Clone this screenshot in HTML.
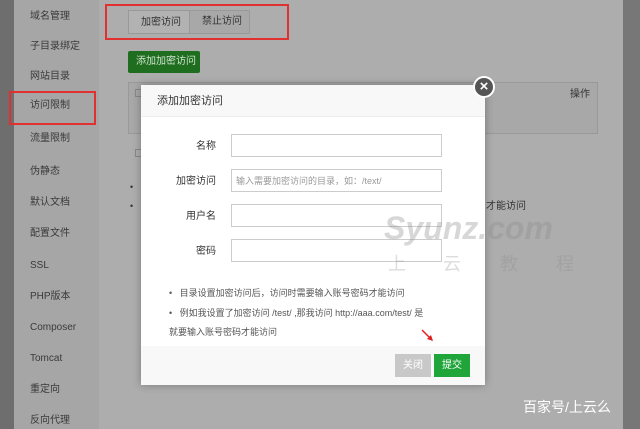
<!DOCTYPE html><html><head><meta charset="utf-8"><style>
*{margin:0;padding:0;box-sizing:border-box}
body{width:640px;height:429px;overflow:hidden;position:relative;background:#adadad;font-family:"Liberation Sans","Noto Sans CJK SC",sans-serif;font-size:10px;color:#333}
.abs{position:absolute}
.side div{position:absolute;left:30px;color:#3a3a3a;font-size:10px;line-height:12px}
.lbl{position:absolute;right:0;width:80px;text-align:right;color:#333;font-size:10px;line-height:12px}
.inp{position:absolute;left:231px;width:211px;height:23px;border:1px solid #ccc;background:#fff;font-size:9px;color:#999;padding:5px 0 0 4px;line-height:12px}
</style></head><body>
<div class="abs" style="left:0;top:0;width:14px;height:429px;background:#6e6e6e"></div>
<div class="abs" style="left:14px;top:0;width:85px;height:429px;background:#a6a6a6"></div>
<div class="abs" style="left:623px;top:0;width:17px;height:429px;background:#777"></div>
<div class="side">
<div style="top:11px">域名管理</div><div style="top:41px">子目录绑定</div><div style="top:71px">网站目录</div><div style="top:100px">访问限制</div><div style="top:133px">流量限制</div><div style="top:166px">伪静态</div><div style="top:197px">默认文档</div><div style="top:228px">配置文件</div><div style="top:260px">SSL</div><div style="top:291px">PHP版本</div><div style="top:322px">Composer</div><div style="top:353px">Tomcat</div><div style="top:384px">重定向</div><div style="top:415px">反向代理</div>
</div>
<div class="abs" style="left:9px;top:91px;width:87px;height:34px;border:2px solid #e03030"></div>
<div class="abs" style="left:128px;top:10px;width:122px;height:24px;border:1px solid #999;background:#a8a8a8"></div>
<div class="abs" style="left:128px;top:10px;width:62px;height:24px;background:#b2b2b2;border:1px solid #999;font-size:10px;line-height:12px;padding:6px 0 0 12px">加密访问</div>
<div class="abs" style="left:202px;top:16px;font-size:10px;line-height:12px">禁止访问</div>
<div class="abs" style="left:105px;top:4px;width:184px;height:36px;border:2px solid #e03030"></div>
<div class="abs" style="left:128px;top:51px;width:72px;height:22px;background:#1f6e1f;color:#cfe3cf;font-size:10px;line-height:12px;padding:5px 0 0 8px;border-radius:2px">添加加密访问</div>
<div class="abs" style="left:128px;top:82px;width:470px;height:52px;border:1px solid #999;background:#a8a8a8"></div>
<div class="abs" style="left:135px;top:89px;width:8px;height:8px;border:1px solid #888"></div>
<div class="abs" style="left:135px;top:149px;width:8px;height:8px;border:1px solid #888"></div>
<div class="abs" style="left:130px;top:182px;font-size:9px;line-height:10px">•</div>
<div class="abs" style="left:130px;top:201px;font-size:9px;line-height:10px">•</div>
<div class="abs" style="left:570px;top:89px;font-size:10px;line-height:12px">操作</div>
<div class="abs" style="left:486px;top:201px;font-size:10px;line-height:12px">才能访问</div>
<div class="abs" style="left:141px;top:85px;width:344px;height:300px;background:#fff;box-shadow:0 0 8px rgba(0,0,0,.3)"></div>
<div class="abs" style="left:141px;top:85px;width:344px;height:32px;background:#f8f8f8;border-bottom:1px solid #eee;font-size:11px;line-height:13px;padding:10px 0 0 16px">添加加密访问</div>
<div class="abs" style="left:141px;top:346px;width:344px;height:39px;background:#f8f8f8"></div>
<div class="lbl" style="left:136px;top:141px">名称</div>
<div class="lbl" style="left:136px;top:176px">加密访问</div>
<div class="lbl" style="left:136px;top:211px">用户名</div>
<div class="lbl" style="left:136px;top:246px">密码</div>
<div class="inp" style="top:134px"></div>
<div class="inp" style="top:169px">输入需要加密访问的目录，如：/text/</div>
<div class="inp" style="top:204px"></div>
<div class="inp" style="top:239px"></div>
<div class="abs" style="left:169px;top:287px;font-size:9px;line-height:12px;color:#555">•&nbsp;&nbsp;&nbsp;目录设置加密访问后，访问时需要输入账号密码才能访问</div>
<div class="abs" style="left:169px;top:304px;font-size:9px;color:#555;width:300px;line-height:19px">•&nbsp;&nbsp;&nbsp;例如我设置了加密访问 /test/ ,那我访问 http://aaa.com/test/ 是<br>就要输入账号密码才能访问</div>
<div class="abs" style="left:384px;top:210px;font-family:'Liberation Sans';font-style:italic;font-weight:bold;font-size:32px;line-height:36px;color:rgba(140,140,140,.35)">Syunz.com</div>
<div class="abs" style="left:388px;top:254px;font-size:18px;line-height:20px;color:rgba(140,140,140,.3)"><span style="position:absolute;left:0">上</span><span style="position:absolute;left:55px">云</span><span style="position:absolute;left:112px">教</span><span style="position:absolute;left:168px">程</span></div>
<svg class="abs" style="left:420px;top:328px" width="16" height="16"><path d="M2 2L12 12" stroke="#e02020" stroke-width="1.5"/><path d="M13 13L7 11L11 7Z" fill="#e02020"/></svg>
<div class="abs" style="left:395px;top:354px;width:36px;height:23px;background:#c8c8c8;color:#fff;font-size:10px;text-align:center;line-height:23px">关闭</div>
<div class="abs" style="left:434px;top:354px;width:36px;height:23px;background:#20a53a;color:#fff;font-size:10px;text-align:center;line-height:23px">提交</div>
<div class="abs" style="left:473px;top:76px;width:22px;height:22px;border-radius:50%;background:#555;border:2px solid #fff;color:#fff;font-size:15px;font-weight:bold;text-align:center;line-height:17px">×</div>
<div class="abs" style="left:523px;top:398px;font-size:14px;line-height:18px;color:#fff">百家号/上云么</div>
</body></html>
